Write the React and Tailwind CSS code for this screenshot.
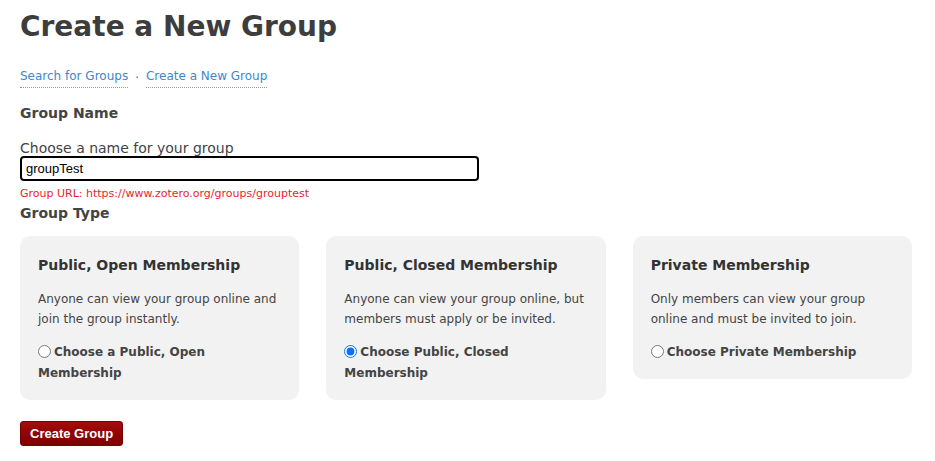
import React, { useState } from 'react';

const options = [
  {
    id: 'open',
    title: 'Public, Open Membership',
    text: 'Anyone can view your group online and join the group instantly.',
    label: 'Choose a Public, Open Membership',
  },
  {
    id: 'closed',
    title: 'Public, Closed Membership',
    text: 'Anyone can view your group online, but members must apply or be invited.',
    label: 'Choose Public, Closed Membership',
  },
  {
    id: 'private',
    title: 'Private Membership',
    text: 'Only members can view your group online and must be invited to join.',
    label: 'Choose Private Membership',
  },
];

export default function App() {
  const [name, setName] = useState('groupTest');
  const [type, setType] = useState('closed');
  return (
    <div className="min-h-screen bg-white px-5 pt-[9px] text-[#444] font-['DejaVu_Sans',Verdana,sans-serif]">
      <h1 className="text-[28px] font-bold leading-[36px] text-[#3d3d3d]">Create a New Group</h1>
      <div className="mt-[23px] flex items-center text-[12px] leading-[16px] text-[#3d87cd]">
        <a href="#" className="border-b border-dotted border-[#999] pb-[3px]">Search for Groups</a>
        <span className="mx-[7px] text-[#666]">·</span>
        <a href="#" className="border-b border-dotted border-[#999] pb-[3px]">Create a New Group</a>
      </div>
      <h2 className="mt-[16px] text-[14px] font-bold leading-[18px]">Group Name</h2>
      <label className="mt-[18px] block text-[14px] leading-[17px]">Choose a name for your group</label>
      <input
        value={name}
        onChange={(e) => setName(e.target.value)}
        className="-mt-px block h-[25px] w-[459px] rounded-[4px] border-2 border-black px-[4px] text-[13px] text-black outline-none font-['Liberation_Sans',Arial,sans-serif]"
      />
      <p className="mt-[6px] text-[11px] leading-[14px] text-[#e8262b]">Group URL: https://www.zotero.org/groups/{name.toLowerCase()}</p>
      <h2 className="mt-[3px] text-[14px] font-bold leading-[18px]">Group Type</h2>
      <div className="mt-[14px] grid w-[892px] grid-cols-3 items-start gap-[27px]">
        {options.map((o) => (
          <div key={o.id} className="rounded-[10px] bg-[#f2f2f2] px-[18px] pb-[16px] pt-[19px]">
            <h3 className="text-[14px] font-bold leading-[20px] text-[#333]">{o.title}</h3>
            <p className="mt-[14px] text-[12px] leading-[20px]">{o.text}</p>
            <label className="mt-[13px] block text-[12px] font-bold leading-[21px]">
              <input
                type="radio"
                name="type"
                checked={type === o.id}
                onChange={() => setType(o.id)}
                className="mr-[3px] h-[13px] w-[13px] align-[-2px] accent-[#0a72f0]"
              />
              {o.label}
            </label>
          </div>
        ))}
      </div>
      <button className="mt-[21px] h-[25px] rounded-[3px] border border-[#700] bg-gradient-to-b from-[#a40c0c] to-[#7e0000] px-[9px] text-[13px] font-bold text-white font-['Liberation_Sans',Arial,sans-serif]">
        Create Group
      </button>
    </div>
  );
}
